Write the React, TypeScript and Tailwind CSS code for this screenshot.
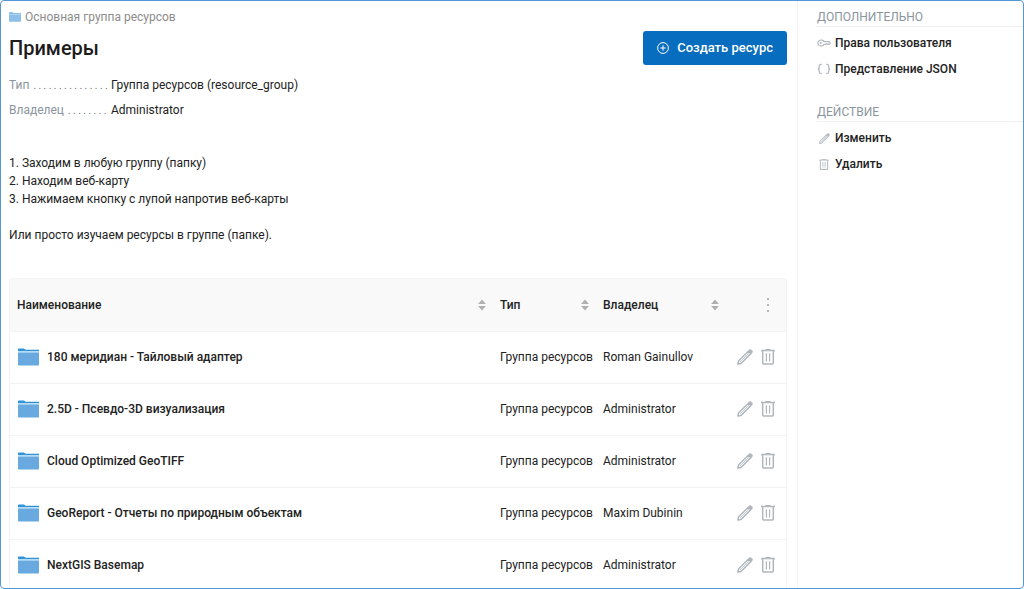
const rows = [
  { name: "180 меридиан - Тайловый адаптер", owner: "Roman Gainullov" },
  { name: "2.5D - Псевдо-3D визуализация", owner: "Administrator" },
  { name: "Cloud Optimized GeoTIFF", owner: "Administrator" },
  { name: "GeoReport - Отчеты по природным объектам", owner: "Maxim Dubinin" },
  { name: "NextGIS Basemap", owner: "Administrator" },
]

function Folder({ className }: { className: string }) {
  return (
    <svg className={className} viewBox="0 0 21 18" preserveAspectRatio="none" aria-hidden="true">
      <path d="M0 1.2Q0 .5.8.5H6l1.6 1.3H21V4H0z" fill="#2f93d8" />
      <path d="M0 3h21v1.4H0z" fill="#b9dcf4" />
      <path d="M0 4.4h21v12.4q0 .7-.8.7H.8q-.8 0-.8-.7z" fill="#68aae0" />
    </svg>
  )
}

function Pencil({ className }: { className: string }) {
  return (
    <svg className={className} viewBox="0 0 16 16" fill="none" stroke="currentColor" aria-hidden="true">
      <path d="M.9 15.1 1.5 12 11.4 2.2l2.4 2.4L4 14.5z" strokeWidth="1.5" strokeLinejoin="round" />
      <path d="M3 13 12 4" strokeWidth=".7" />
      <path d="m11.2 2.1 1.5-1.5q.6-.5 1.2 0l1.5 1.5q.5.6 0 1.2L13.9 4.8z" fill="currentColor" strokeWidth=".5" />
    </svg>
  )
}

function Trash({ className }: { className: string }) {
  return (
    <svg className={className} viewBox="0 0 14 16" fill="none" stroke="currentColor" aria-hidden="true">
      <path d="M0 1.5h14M4.4.6h5.2" strokeWidth="1.4" />
      <path d="M1.7 1.6v12.5q0 1 1 1h8.6q1 0 1-1V1.6" strokeWidth="1.5" />
      <path d="M5.4 4.2v8.2M8.6 4.2v8.2" strokeWidth="1.2" />
    </svg>
  )
}

function Key() {
  return (
    <svg className="h-3 w-[14px]" viewBox="0 0 14 12" fill="none" stroke="currentColor" strokeWidth="1.2" aria-hidden="true">
      <path d="M7.2 4.6A3.4 3 0 1 0 7.2 7.4H8.6L9.4 6.8 10.2 7.4 11 6.8 11.8 7.4H12.3L13.3 6 12.3 4.6z" />
      <circle cx="3.8" cy="6" r=".5" />
    </svg>
  )
}

function Braces() {
  return (
    <svg className="h-3 w-[14px]" viewBox="0 0 14 12" fill="none" stroke="currentColor" strokeWidth="1.3" aria-hidden="true">
      <path d="M4.8 1.4H4.2Q2.3 1.4 2.3 3V4.6Q2.3 6 .8 6 2.3 6 2.3 7.4V9Q2.3 10.6 4.2 10.6H4.8M9.2 1.4h.6q1.9 0 1.9 1.6V4.6Q11.7 6 13.2 6 11.7 6 11.7 7.4V9q0 1.6-1.9 1.6H9.2" />
    </svg>
  )
}

function SortHead({ title }: { title: string }) {
  return (
    <th className="px-[7px] text-left font-medium">
      <button className="flex w-full items-center justify-between">
        {title}
        <svg className="h-3 w-2" viewBox="0 0 8 12" fill="#b0b0b0" aria-hidden="true">
          <path d="M4 .4 7.9 4.9H.1zM4 11.6.1 7.1h7.8z" />
        </svg>
      </button>
    </th>
  )
}

function Field({ label, dots, value }: { label: string; dots: string; value: string }) {
  return (
    <div className="flex h-[25px] items-center">
      <dt className="flex w-[99px] items-baseline gap-1 whitespace-nowrap text-[#8b959c]">
        {label}
        <span className="text-[10px] text-[#626b72]" aria-hidden="true">{dots}</span>
      </dt>
      <dd className="pl-[3px]">{value}</dd>
    </div>
  )
}

function SideLink({ icon, title }: { icon: React.ReactNode; title: string }) {
  return (
    <li>
      <a href="#" className="flex h-[26px] items-center gap-1 font-medium">
        <span className="flex w-[14px] justify-center text-[#b4bac0]">{icon}</span>
        {title}
      </a>
    </li>
  )
}

export default function App() {
  return (
    <div className="flex h-screen overflow-hidden rounded-sm border border-[#5596d6] bg-white font-[Roboto,sans-serif] text-xs text-[#222]">
      <main className="min-w-0 flex-1 pt-1.5 pr-2.5 pl-2">
        <a href="#" className="flex h-5 items-center gap-1 text-[#8c8c8c]">
          <Folder className="h-[10px] w-3 opacity-75" />
          Основная группа ресурсов
        </a>
        <div className="mt-1 flex items-start justify-between">
          <h1 className="mt-0.5 text-xl leading-[30px] font-medium text-[#1c1c1c]">Примеры</h1>
          <button className="flex h-[34px] items-center gap-2 rounded-[3px] bg-[#076dbf] px-[14px] text-[13px] font-medium text-white">
            <svg className="h-3 w-3" viewBox="0 0 12 12" fill="none" stroke="currentColor" aria-hidden="true">
              <circle cx="6" cy="6" r="5.4" />
              <path d="M6 3.2v5.6M3.2 6h5.6" />
            </svg>
            Создать ресурс
          </button>
        </div>
        <dl className="mt-[7px]">
          <Field label="Тип" dots=". . . . . . . . . . . . . . ." value="Группа ресурсов (resource_group)" />
          <Field label="Владелец" dots=". . . . . . . ." value="Administrator" />
        </dl>
        <div className="mt-8 leading-[18px]">
          <p>1. Заходим в любую группу (папку)</p>
          <p>2. Находим веб-карту</p>
          <p>3. Нажимаем кнопку с лупой напротив веб-карты</p>
          <p className="mt-[18px]">Или просто изучаем ресурсы в группе (папке).</p>
        </div>
        <div className="mt-[34px] overflow-hidden rounded-t border border-[#f3f3f3]">
          <table className="w-full table-fixed">
            <colgroup>
              <col />
              <col className="w-[103px]" />
              <col className="w-[130px]" />
              <col className="w-[60px]" />
            </colgroup>
            <thead>
              <tr className="h-[52px] border-b border-[#f3f3f3] bg-[#f9f9f9]">
                <SortHead title="Наименование" />
                <SortHead title="Тип" />
                <SortHead title="Владелец" />
                <th className="pr-[11px]">
                  <button className="ml-auto flex w-[14px] justify-center" aria-label="Меню">
                    <svg className="h-4 w-1" viewBox="0 0 4 16" fill="#a8a8a8" aria-hidden="true">
                      <circle cx="2" cy="2" r="1.1" />
                      <circle cx="2" cy="8" r="1.1" />
                      <circle cx="2" cy="14" r="1.1" />
                    </svg>
                  </button>
                </th>
              </tr>
            </thead>
            <tbody>
              {rows.map((row) => (
                <tr key={row.name} className="h-[52px] border-b border-[#f3f3f3]">
                  <td className="px-2">
                    <a href="#" className="flex items-center gap-2 font-medium">
                      <Folder className="h-[18px] w-[21px]" />
                      {row.name}
                    </a>
                  </td>
                  <td className="px-[7px] whitespace-nowrap">Группа ресурсов</td>
                  <td className="px-[7px]">{row.owner}</td>
                  <td className="pr-[11px]">
                    <div className="flex justify-end gap-2 text-[#b0b7bd]">
                      <button aria-label="Изменить"><Pencil className="h-4 w-4" /></button>
                      <button aria-label="Удалить"><Trash className="h-4 w-[14px]" /></button>
                    </div>
                  </td>
                </tr>
              ))}
            </tbody>
          </table>
        </div>
      </main>
      <aside className="w-[226px] border-l border-[#f3f3f3] pt-1.5 pl-[19px]">
        <h2 className="h-5 border-b border-[#f0f0f0] leading-5 text-[#8b959c]">ДОПОЛНИТЕЛЬНО</h2>
        <ul className="mt-[3px]">
          <SideLink icon={<Key />} title="Права пользователя" />
          <SideLink icon={<Braces />} title="Представление JSON" />
        </ul>
        <h2 className="mt-5 h-5 border-b border-[#f0f0f0] leading-5 text-[#8b959c]">ДЕЙСТВИЕ</h2>
        <ul className="mt-[3px]">
          <SideLink icon={<Pencil className="h-[11px] w-[11px]" />} title="Изменить" />
          <SideLink icon={<Trash className="h-[11px] w-[10px]" />} title="Удалить" />
        </ul>
      </aside>
    </div>
  )
}
